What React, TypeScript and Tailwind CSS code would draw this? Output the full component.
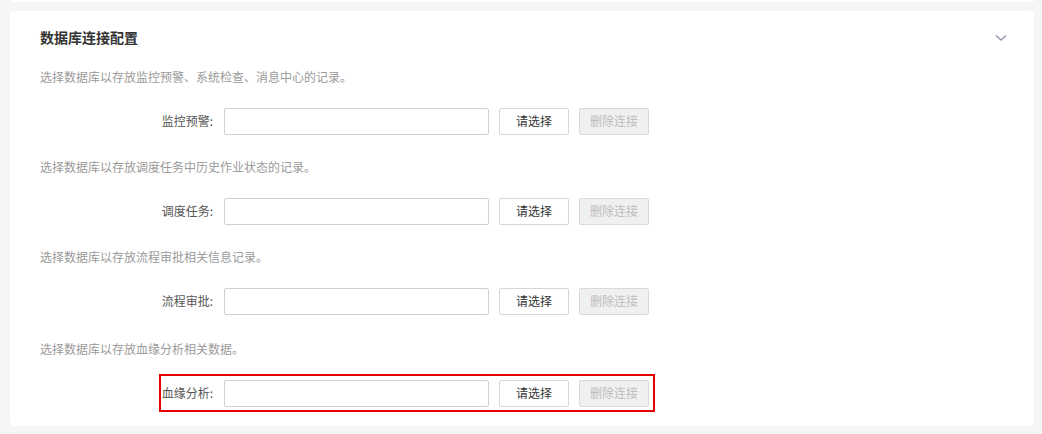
import { ReactNode } from "react";

const font = { fontFamily: '"Noto Sans CJK SC", "Noto Sans", sans-serif' };

const sections = [
  { desc: "选择数据库以存放监控预警、系统检查、消息中心的记录。", label: "监控预警:" },
  { desc: "选择数据库以存放调度任务中历史作业状态的记录。", label: "调度任务:" },
  { desc: "选择数据库以存放流程审批相关信息记录。", label: "流程审批:" },
  { desc: "选择数据库以存放血缘分析相关数据。", label: "血缘分析:", highlight: true },
];

function Row({ label, highlight }: { label: string; highlight?: boolean }) {
  return (
    <div className="flex items-center h-[28px]">
      <div className="w-[174px] text-right text-[12px] text-[#555] pr-[1px]">{label}</div>
      <div className="relative flex items-center ml-[10px]">
        {highlight && (
          <div className="absolute left-[-65px] right-[-6px] top-[-6px] bottom-[-5px] border-2 border-[#e60000] pointer-events-none" />
        )}
        <input className="w-[265px] h-[27px] border border-[#d0d0d0] rounded-[2px] bg-white outline-none" />
        <button className="ml-[10px] w-[70px] h-[27px] border border-[#d6d6d6] rounded-[2px] bg-white text-[12px] text-[#333]">
          请选择
        </button>
        <button
          disabled
          className="ml-[10px] w-[70px] h-[27px] border border-[#dadada] rounded-[2px] bg-[#f0f0f0] text-[12px] text-[#bdbdbd]"
        >
          删除连接
        </button>
      </div>
    </div>
  );
}

function Section({ children, className }: { children: ReactNode; className?: string }) {
  return <div className={className}>{children}</div>;
}

export default function App() {
  return (
    <div className="w-[1042px] h-[434px] bg-[#f5f6f8] overflow-hidden" style={font}>
      <div className="ml-[11px] mr-[8px] h-[2px] bg-white rounded-b-[3px]" />
      <div className="mt-[9px] ml-[10px] w-[1024px] h-[415px] bg-white rounded-[4px] pl-[30px] pr-[26px] pt-[16px]">
        <div className="flex items-center justify-between h-[20px]">
          <h2 className="text-[14px] font-bold text-[#333] leading-[20px]">数据库连接配置</h2>
          <svg width="12" height="8" viewBox="0 0 12 8" className="mr-[1px] mt-[1px]">
            <path d="M1 1.5 6 6l5-4.5" fill="none" stroke="#8d96a8" strokeWidth="1.4" />
          </svg>
        </div>
        {sections.map((s, i) => (
          <Section key={i} className={i === 0 ? "mt-[20px]" : i === 3 ? "mt-[24px]" : "mt-[22px]"}>
            <p className="text-[12px] leading-[20px] text-[#9a9a9a]">{s.desc}</p>
            <div className="mt-[20px]">
              <Row label={s.label} highlight={s.highlight} />
            </div>
          </Section>
        ))}
      </div>
    </div>
  );
}
